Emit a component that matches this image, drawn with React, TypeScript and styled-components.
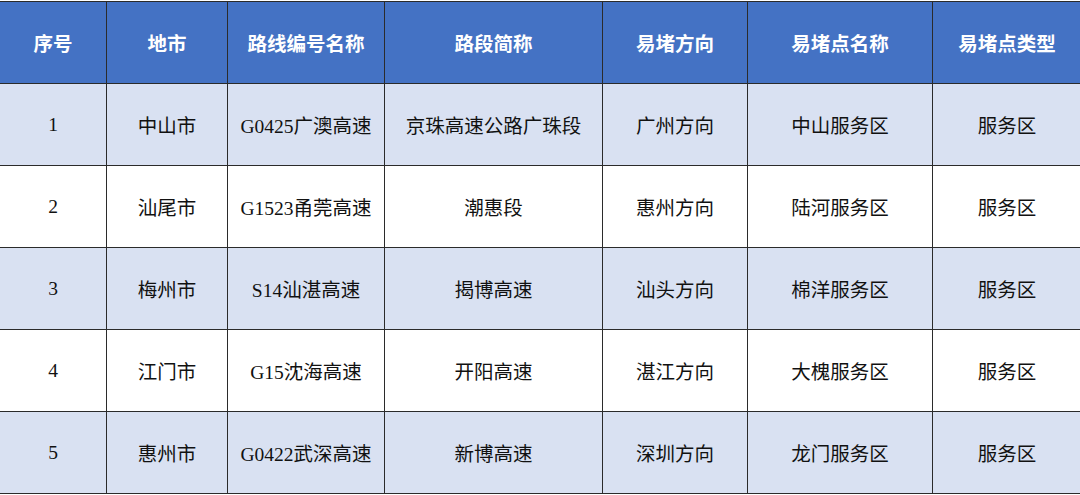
import { createGlobalStyle, styled } from "styled-components";

type Row = {
  no: number;
  city: string;
  route: string;
  section: string;
  direction: string;
  spot: string;
  kind: string;
};

const rows: Row[] = [
  { no: 1, city: "中山市", route: "G0425广澳高速", section: "京珠高速公路广珠段", direction: "广州方向", spot: "中山服务区", kind: "服务区" },
  { no: 2, city: "汕尾市", route: "G1523甬莞高速", section: "潮惠段", direction: "惠州方向", spot: "陆河服务区", kind: "服务区" },
  { no: 3, city: "梅州市", route: "S14汕湛高速", section: "揭博高速", direction: "汕头方向", spot: "棉洋服务区", kind: "服务区" },
  { no: 4, city: "江门市", route: "G15沈海高速", section: "开阳高速", direction: "湛江方向", spot: "大槐服务区", kind: "服务区" },
  { no: 5, city: "惠州市", route: "G0422武深高速", section: "新博高速", direction: "深圳方向", spot: "龙门服务区", kind: "服务区" },
];

const columns = [
  { title: "序号", width: 107 },
  { title: "地市", width: 121 },
  { title: "路线编号名称", width: 157 },
  { title: "路段简称", width: 218 },
  { title: "易堵方向", width: 145 },
  { title: "易堵点名称", width: 185 },
  { title: "易堵点类型", width: 149 },
];

const GlobalStyle = createGlobalStyle`
  html, body {
    margin: 0;
    padding: 0;
    background: #ffffff;
  }
  body {
    font-family: "Liberation Serif", "Noto Sans CJK SC", serif;
  }
`;

export default function App() {
  return (
    <>
      <GlobalStyle />
      <Page>
        <Table>
          <colgroup>
            {columns.map((c) => (
              <col key={c.title} style={{ width: c.width }} />
            ))}
          </colgroup>
          <thead>
            <tr>
              {columns.map((c) => (
                <HeadCell key={c.title}>{c.title}</HeadCell>
              ))}
            </tr>
          </thead>
          <tbody>
            {rows.map((r, i) => (
              <BodyRow key={r.no} $shaded={i % 2 === 0}>
                <Cell>{r.no}</Cell>
                <Cell>{r.city}</Cell>
                <Cell>{r.route}</Cell>
                <Cell>{r.section}</Cell>
                <Cell>{r.direction}</Cell>
                <Cell>{r.spot}</Cell>
                <Cell>{r.kind}</Cell>
              </BodyRow>
            ))}
          </tbody>
        </Table>
      </Page>
    </>
  );
}

const Page = styled.div`
  width: 1080px;
  height: 495px;
  padding-top: 1px;
  box-sizing: border-box;
  overflow: hidden;
`;

const Table = styled.table`
  width: 1083px;
  margin-left: -1px;
  border-collapse: collapse;
  table-layout: fixed;
  font-size: 19.5px;
  color: #111111;
`;

const HeadCell = styled.th`
  height: 81px;
  padding: 0;
  background: #4472c4;
  color: #ffffff;
  font-weight: 700;
  text-align: center;
  vertical-align: middle;
  border: 1.5px solid #2b2b2b;
`;

const BodyRow = styled.tr<{ $shaded: boolean }>`
  background: ${(p) => (p.$shaded ? "#d9e1f2" : "#ffffff")};
`;

const Cell = styled.td`
  height: 81px;
  padding: 0;
  text-align: center;
  vertical-align: middle;
  border: 1.5px solid #2b2b2b;
`;
